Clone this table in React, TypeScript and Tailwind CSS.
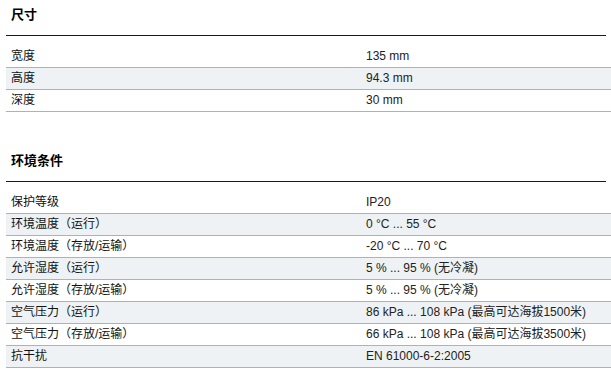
import React from 'react';

type Row = { label: string; value: string };

const dimensions: Row[] = [
  { label: '宽度', value: '135 mm' },
  { label: '高度', value: '94.3 mm' },
  { label: '深度', value: '30 mm' },
];

const environment: Row[] = [
  { label: '保护等级', value: 'IP20' },
  { label: '环境温度（运行）', value: '0 °C ... 55 °C' },
  { label: '环境温度（存放/运输）', value: '-20 °C ... 70 °C' },
  { label: '允许湿度（运行）', value: '5 % ... 95 % (无冷凝)' },
  { label: '允许湿度（存放/运输）', value: '5 % ... 95 % (无冷凝)' },
  { label: '空气压力（运行）', value: '86 kPa ... 108 kPa (最高可达海拔1500米)' },
  { label: '空气压力（存放/运输）', value: '66 kPa ... 108 kPa (最高可达海拔3500米)' },
  { label: '抗干扰', value: 'EN 61000-6-2:2005' },
];

const Section: React.FC<{ title: string; rows: Row[]; className?: string }> = ({ title, rows, className = '' }) => (
  <section className={className}>
    <h2 className="mr-[5px] h-[36px] border-b border-[#1a1a1a] pt-[6px] pl-[5px] text-[13px] font-bold leading-[18px] text-black">
      {title}
    </h2>
    <div className="mt-[10px]">
      {rows.map((row, i) => (
        <div
          key={row.label}
          className={`flex h-[22px] items-center border-b border-[#a7b3bf] text-[12px] leading-[21px] ${
            i % 2 === 1 ? 'bg-[#eef2f5]' : 'bg-white'
          }`}
        >
          <div className="w-[355px] shrink-0 pl-[5px] text-[#111]">{row.label}</div>
          <div className="pl-[5px] text-[#222]">{row.value}</div>
        </div>
      ))}
    </div>
  </section>
);

export default function App() {
  return (
    <div
      className="h-[369px] w-[611px] overflow-hidden bg-white pl-[6px]"
      style={{ fontFamily: '"Liberation Sans", Arial, "Noto Sans CJK SC", sans-serif' }}
    >
      <Section title="尺寸" rows={dimensions} />
      <Section title="环境条件" rows={environment} className="pt-[34px]" />
    </div>
  );
}
